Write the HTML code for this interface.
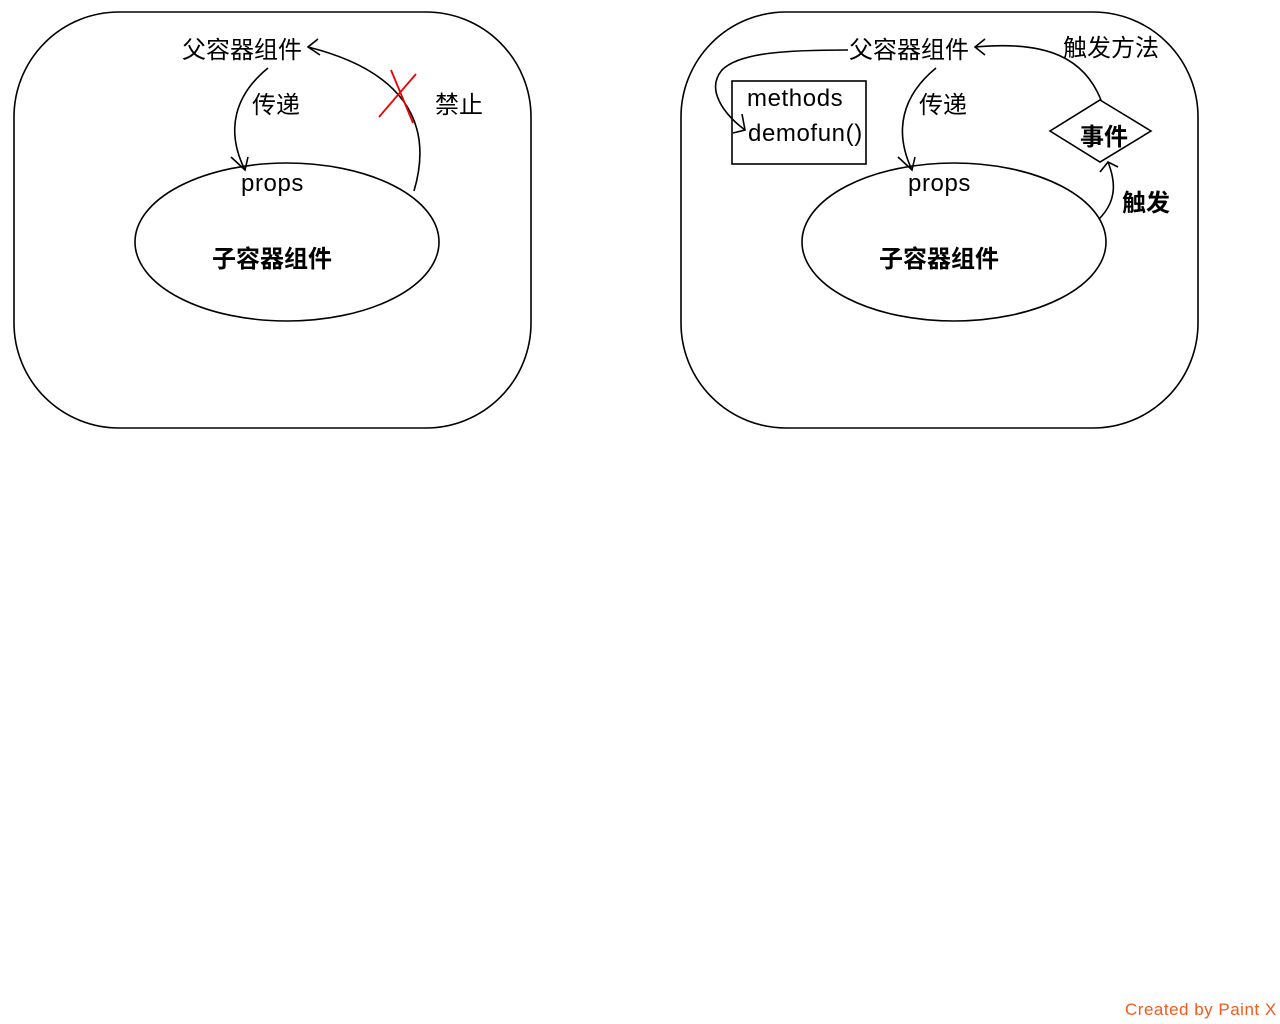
<!DOCTYPE html>
<html><head><meta charset="utf-8"><style>
html,body{margin:0;padding:0;background:#fff;width:1280px;height:1024px;overflow:hidden}
svg{display:block}
text{font-family:"Liberation Sans","Noto Sans CJK SC",sans-serif;font-size:24px;fill:#000}
.l{font-size:24px;letter-spacing:0.6px}
.b{font-weight:bold}
</style></head><body>
<svg width="1280" height="1024" viewBox="0 0 1280 1024" xmlns="http://www.w3.org/2000/svg">
<g fill="none" stroke="#000" stroke-width="1.6">
<rect x="14" y="12" width="517" height="416" rx="105" ry="105"/>
<rect x="681" y="12" width="517" height="416" rx="105" ry="105"/>
<ellipse cx="287" cy="242" rx="152" ry="79"/>
<ellipse cx="954" cy="242" rx="152" ry="79"/>
<path d="M268 68 C235 95 225 130 245 170"/>
<path d="M231 157 L245 170 L248 157"/>
<path d="M414 191 C435 120 400 70 308 47"/>
<path d="M318 39 L308 47 L320 55"/>
<rect x="732" y="81" width="134" height="83"/>
<path d="M848 50 C790 50 740 52 722 70 C705 90 725 115 745 130"/>
<path d="M742 114 L745 130 L733 133"/>
<path d="M936 68 C903 95 893 130 912 170"/>
<path d="M898 157 L912 170 L915 157"/>
<path d="M1101 100 C1085 60 1050 40 975 47"/>
<path d="M985 39 L975 47 L985 55"/>
<polygon points="1100,100 1151,131 1100,162 1050,131"/>
<path d="M1099 219 C1118 200 1115 180 1108 162"/>
<path d="M1100 172 L1108 162 L1118 167"/>
</g>
<g stroke="#e00" stroke-width="1.8">
<line x1="379" y1="117" x2="416" y2="74"/>
<line x1="391" y1="70" x2="413" y2="123"/>
</g>
<text x="182" y="58">父容器组件</text>
<text x="252" y="113">传递</text>
<text x="435" y="113">禁止</text>
<text x="241" y="191" class="l">props</text>
<text x="212" y="267" class="b">子容器组件</text>
<text x="849" y="58">父容器组件</text>
<text x="919" y="113">传递</text>
<text x="1063" y="56">触发方法</text>
<text x="747" y="106" class="l">methods</text>
<text x="748" y="141" class="l">demofun()</text>
<text x="1080" y="145" class="b">事件</text>
<text x="908" y="191" class="l">props</text>
<text x="1122" y="211" class="b">触发</text>
<text x="879" y="267" class="b">子容器组件</text>
<text x="1125" y="1015" style="font-size:17px;letter-spacing:0.5px;fill:#f25a1e">Created by Paint X</text>
</svg>
</body></html>
